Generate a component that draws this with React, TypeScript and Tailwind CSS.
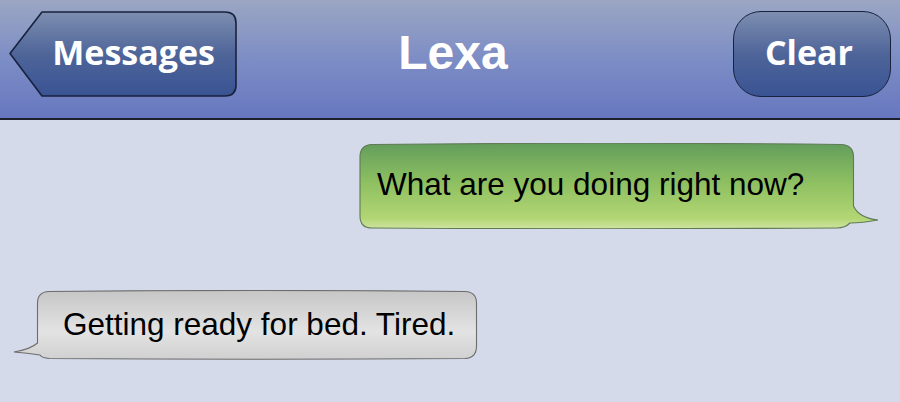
import React from "react";

const BackButton: React.FC<{ label: string }> = ({ label }) => {
	return (
		<div className="relative flex h-[86px] w-[228px] items-center justify-end pr-[22px] pb-[4px]">
			<svg className="absolute inset-0" width="228" height="86" viewBox="0 0 228 86">
				<defs>
					<linearGradient id="navBtn" x1="0" y1="0" x2="0" y2="1">
						<stop offset="0" stopColor="#7d8eb0" />
						<stop offset="0.5" stopColor="#4f6599" />
						<stop offset="1" stopColor="#3a5393" />
					</linearGradient>
				</defs>
				<path
					d="M1,42.5 L33,1 H216 Q227,1 227,12 V74 Q227,85 216,85 H33 Z"
					fill="url(#navBtn)"
					stroke="#18223d"
					strokeWidth="1.6"
					strokeLinejoin="round"
				/>
			</svg>
			<span className="relative font-['Open_Sans'] text-[34px] font-bold leading-none text-white">{label}</span>
		</div>
	);
};

const PillButton: React.FC<{ label: string }> = ({ label }) => {
	return (
		<div className="flex h-[86px] w-[158px] items-center justify-center rounded-[28px] border-[1.6px] border-[#18223d] bg-gradient-to-b from-[#7d8eb0] via-[#4f6599] to-[#3a5393] pr-[6px] pb-[4px]">
			<span className="font-['Open_Sans'] text-[34px] font-bold leading-none text-white">{label}</span>
		</div>
	);
};

// outgoing bubble: body on the left, tail hooking out at the bottom right
const SentBubble: React.FC<{ text: string }> = ({ text }) => {
	return (
		<div className="relative h-[86px] w-[521px]">
			<svg className="absolute inset-0" width="521" height="86" viewBox="0 0 521 86">
				<defs>
					<linearGradient id="sentFill" x1="0" y1="0" x2="0" y2="1">
						<stop offset="0" stopColor="#639d5c" />
						<stop offset="0.45" stopColor="#8dbf61" />
						<stop offset="0.88" stopColor="#b3d674" />
						<stop offset="1" stopColor="#cfe3a3" />
					</linearGradient>
				</defs>
				<path
					d="M13,1.5 Q247,-1 482,1.5 Q494.5,2 494.5,14 V63 Q500,75 519,77 Q503,80 491,80 Q486,85 478,85 Q247,86.5 13,85 Q1,85 1,73 V14 Q1,2 13,1.5 Z"
					fill="url(#sentFill)"
					stroke="#5f7a55"
					strokeWidth="1.1"
				/>
			</svg>
			<div className="relative flex h-full items-center pl-[18px] pb-[2px]">
				<span className="font-['Liberation_Sans'] text-[31.5px] leading-none text-black">{text}</span>
			</div>
		</div>
	);
};

// incoming bubble: tail on the bottom left
const ReceivedBubble: React.FC<{ text: string }> = ({ text }) => {
	return (
		<div className="relative h-[70px] w-[465px]">
			<svg className="absolute inset-0" width="465" height="70" viewBox="0 0 465 70">
				<defs>
					<linearGradient id="recvFill" x1="0" y1="0" x2="0" y2="1">
						<stop offset="0" stopColor="#c6c6c6" />
						<stop offset="0.6" stopColor="#e3e3e3" />
						<stop offset="1" stopColor="#d0d0d0" />
					</linearGradient>
				</defs>
				<path
					d="M36,1.5 Q244,-0.5 452,1.5 Q463.5,2 463.5,13 V56 Q463.5,68 452,68.5 Q244,70 36,68.5 Q29,68 27,65 Q14,63 1,62 Q18,59 24.5,53 V13 Q24.5,2 36,1.5 Z"
					fill="url(#recvFill)"
					stroke="#6c6c6c"
					strokeWidth="1.1"
				/>
			</svg>
			<div className="relative flex h-full items-center pl-[50px]">
				<span className="font-['Liberation_Sans'] text-[31.5px] leading-none text-black">{text}</span>
			</div>
		</div>
	);
};

export default function App() {
	return (
		<div className="flex h-[402px] w-[900px] flex-col overflow-hidden bg-[#d4daea]">
			{/* NAV BAR */}
			<header className="grid h-[120px] shrink-0 grid-cols-[1fr_auto_1fr] items-start border-b-2 border-[#1c1f2c] bg-gradient-to-b from-[#9ba6c3] via-[#7d8dc5] to-[#6777bf] px-[9px] pt-[11px]">
				<div className="flex justify-start">
					<BackButton label="Messages" />
				</div>
				<div className="flex h-[86px] items-center justify-center pl-[6px] pb-[3px]">
					<h1 className="font-['Liberation_Sans'] text-[48px] font-bold leading-none text-white">Lexa</h1>
				</div>
				<div className="flex justify-end">
					<PillButton label="Clear" />
				</div>
			</header>

			{/* THREAD */}
			<main className="flex flex-col pt-[23px]">
				<div className="flex justify-end pr-[20px]">
					<SentBubble text="What are you doing right now?" />
				</div>
				<div className="mt-[61px] flex pl-[13px]">
					<ReceivedBubble text="Getting ready for bed. Tired." />
				</div>
			</main>
		</div>
	);
}
